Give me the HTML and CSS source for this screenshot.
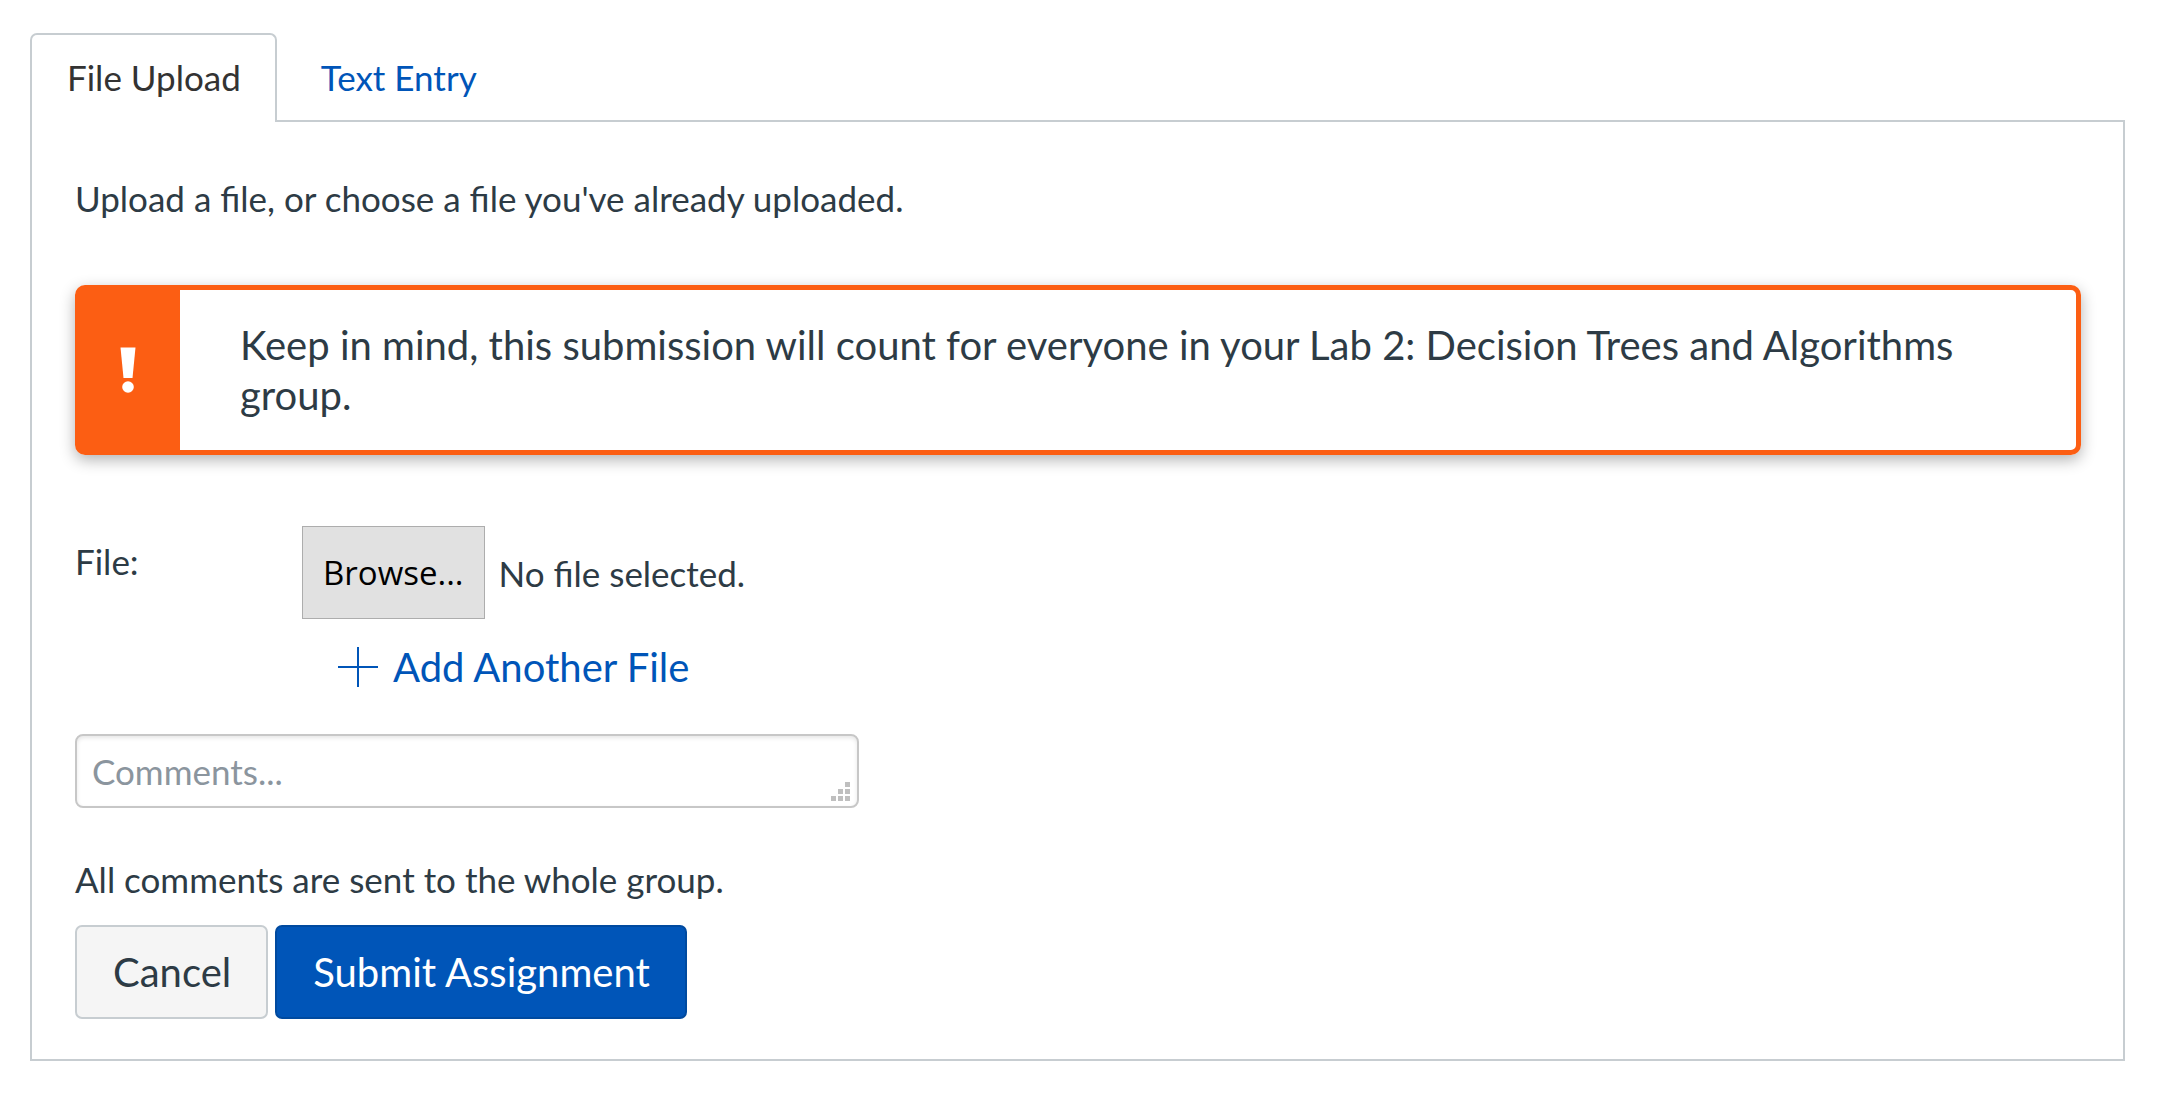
FILE: index.html
```html
<!DOCTYPE html>
<html lang="en">
<head>
<meta charset="utf-8">
<title>Submit Assignment</title>
<link rel="stylesheet" href="styles.css">
</head>
<body>
<main class="submission">
  <nav class="tabs">
    <a class="tab tab-active" href="#file-upload" aria-current="page">File Upload</a>
    <a class="tab" href="#text-entry">Text Entry</a>
  </nav>
  <form class="panel" id="file-upload">
    <p class="intro">Upload a file, or choose a file you've already uploaded.</p>
    <div class="alert">
      <div class="alert-icon">
        <svg width="16" height="46" viewBox="0 0 16 46" fill="#fff" aria-hidden="true"><path d="M0.500 0.500H15.500L12.500 31H3.500Z"/><circle cx="8" cy="40" r="5.800"/></svg>
      </div>
      <p class="alert-text">Keep in mind, this submission will count for everyone in your Lab 2: Decision Trees and Algorithms group.</p>
    </div>
    <div class="file-row">
      <label class="file-label" for="file">File:</label>
      <div class="file-picker">
        <input class="file-input" type="file" id="file">
        <label class="browse" for="file">Browse...</label>
        <span>No file selected.</span>
      </div>
    </div>
    <a class="add-file" href="#add">
      <svg width="40" height="40" viewBox="0 0 40 40" stroke="#0055b8" stroke-width="2" aria-hidden="true"><path d="M20 0V40M0 20H40"/></svg>
      Add Another File
    </a>
    <div class="comment-box">
      <textarea class="comment" rows="1" placeholder="Comments..." aria-label="Comments"></textarea>
      <svg class="grip" width="19" height="19" viewBox="0 0 19 19" fill="#bfbfbf" aria-hidden="true"><path d="M14 0h5v5h-5zM7 7h5v5h-5zM14 7h5v5h-5zM0 14h5v5h-5zM7 14h5v5h-5zM14 14h5v5h-5z"/></svg>
    </div>
    <p class="note">All comments are sent to the whole group.</p>
    <div class="actions">
      <button class="btn" type="button">Cancel</button>
      <button class="btn btn-primary" type="submit">Submit Assignment</button>
    </div>
  </form>
</main>
</body>
</html>
```
FILE: styles.css
```css
* { box-sizing: border-box; }
body {
  margin: 0;
  background: #fff;
  color: #2d3b45;
  font-family: Lato, "Liberation Sans", sans-serif;
  font-size: 35px;
  line-height: 50px;
}
p { margin: 0; }
a { color: #0055b8; text-decoration: none; }
.submission { padding: 33px 35px 33px 30px; }
.tabs { display: flex; }
.tab {
  padding: 17px 42px 18px;
  border: 2px solid transparent;
  border-bottom: 0;
  border-radius: 7px 7px 0 0;
}
.tab-active {
  z-index: 1;
  margin-bottom: -2px;
  padding: 17px 34px 20px 35px;
  border-color: #c7cdd1;
  background: #fff;
  color: #333;
}
.panel {
  display: flex;
  flex-direction: column;
  align-items: flex-start;
  padding: 51px 42px 40px 43px;
  border: 2px solid #c7cdd1;
}
.alert {
  display: flex;
  width: 100%;
  margin: 62px 0 71px;
  border: 5px solid #fc5e13;
  border-radius: 10px;
  box-shadow: 0 5px 15px rgba(0, 0, 0, 0.3);
}
.alert-icon {
  display: flex;
  flex: none;
  align-items: center;
  justify-content: center;
  width: 100px;
  padding-right: 4px;
  background: #fc5e13;
}
.alert-text { padding: 30px 60px; font-size: 40px; }
.file-row { display: flex; align-items: flex-start; }
.file-label { width: 227px; padding-top: 10px; }
.file-picker { display: flex; align-items: center; gap: 14px; }
.file-input { position: absolute; width: 1px; height: 1px; opacity: 0; }
.browse {
  padding: 21px 20px 20px;
  border: 1px solid #adadad;
  background: #e1e1e1;
  color: #000;
  font-family: "Open Sans", sans-serif;
  font-size: 33px;
}
.add-file {
  display: flex;
  align-items: center;
  gap: 15px;
  margin: 23px 0 42px 263px;
  font-size: 40px;
}
.comment-box { position: relative; display: flex; width: 784px; max-width: 100%; }
.comment {
  width: 100%;
  height: 74px;
  padding: 10px 15px;
  border: 2px solid #c7c7c7;
  border-radius: 8px;
  box-shadow: inset 0 2px 4px rgba(0, 0, 0, 0.1);
  font: inherit;
  resize: none;
}
.comment::placeholder { color: #8b959e; }
.grip { position: absolute; right: 9px; bottom: 7px; }
.note { margin: 46px 0 21px; }
.actions { display: flex; gap: 7px; }
.btn {
  padding: 20px 35px 20px 36px;
  border: 2px solid #c7cdd1;
  border-radius: 7px;
  background: #f5f5f5;
  color: #2d3b45;
  font: inherit;
  font-size: 40px;
}
.btn-primary { border-color: #004a9f; background: #0055b8; color: #fff; }
```
